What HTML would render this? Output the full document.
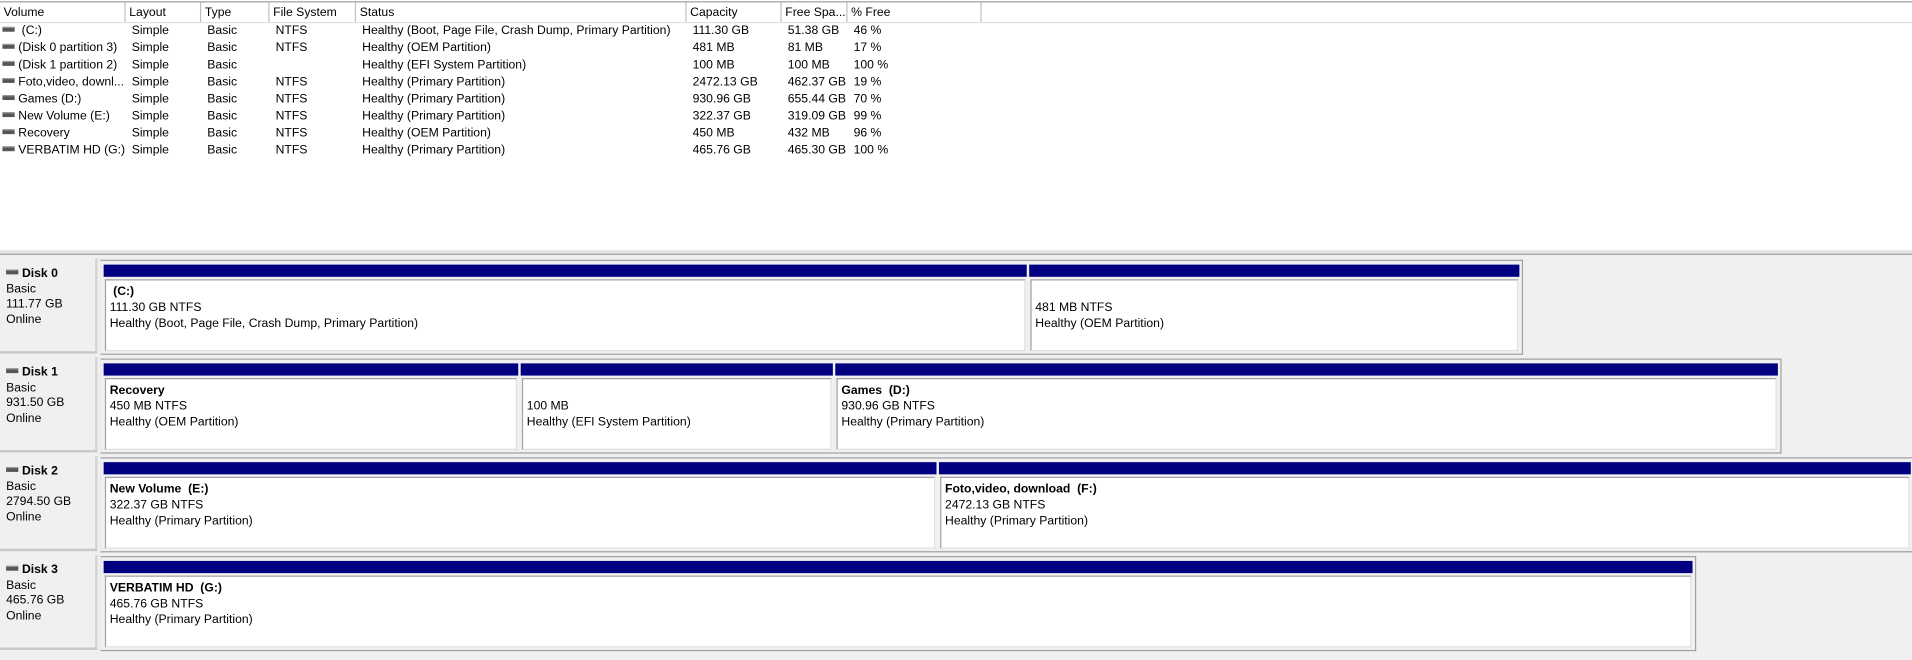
<!DOCTYPE html>
<html><head><style>
html,body{margin:0;padding:0;width:1912px;height:660px;overflow:hidden;background:#f0f0f0}
#w{position:absolute;left:0;top:0;width:1568px;height:541px;transform:scale(1.2194);transform-origin:0 0;font-family:"Liberation Sans",sans-serif;font-size:10px;color:#000}
.a{position:absolute;white-space:nowrap}
#top{position:absolute;left:0;top:0;width:1568px;height:205px;background:#fff;border-bottom:1px solid #c8c8c8}
#hdr{position:absolute;left:0;top:1px;width:1568px;height:16px;border-top:1px solid #a0a0a0;border-bottom:1px solid #e0e0e0;background:#fff}
.hc{position:absolute;top:0;height:16px;border-right:1px solid #c0c0c0;padding-left:3px;line-height:18px}
.ic{display:inline-block;width:10px;height:3px;background:#555;border-top:1px solid #999;vertical-align:middle;margin-right:3px;position:relative;top:-1px}
.disk{position:absolute;left:0;width:1568px}
.lbl{position:absolute;left:0;top:0;width:80px;height:78px;border-right:2px solid #d4d4d4;border-bottom:2px solid #c8c8c8;line-height:12.5px;padding:7px 0 0 5px;box-sizing:border-box}
.box{position:absolute;top:1px;height:78px;border:1px solid #a0a0a0;border-left:1px solid #e8e8e8;box-sizing:border-box;background:#f0f0f0}
.p{position:absolute;top:3px;height:72px}
.bar{position:absolute;left:0;right:0;top:0;height:10px;background:#000080}
.pc{position:absolute;left:1px;right:1px;top:12px;bottom:1px;background:#fff;border:1px solid #a0a0a0;border-right-color:#e0e0e0;border-bottom-color:#e0e0e0;padding:4px 0 0 3px;line-height:12.8px}
</style></head><body><div id="w">
<div id="top">
<div id="hdr">
<div class="hc" style="left:0;width:99px">Volume</div>
<div class="hc" style="left:103px;width:58px">Layout</div>
<div class="hc" style="left:165px;width:52px">Type</div>
<div class="hc" style="left:221px;width:67px">File System</div>
<div class="hc" style="left:292px;width:267px">Status</div>
<div class="hc" style="left:563px;width:74px">Capacity</div>
<div class="hc" style="left:641px;width:50px">Free Spa...</div>
<div class="hc" style="left:695px;width:106px">% Free</div>
</div>
<div id="rows"></div>
</div>
<div style="position:absolute;left:0;top:205px;width:1568px;height:3px;background:#e4e4e4;border-bottom:1px solid #a0a0a0"></div>

<div class="disk" style="top:212px">
<div class="lbl"><b><span class="ic"></span>Disk 0</b><br>Basic<br>111.77 GB<br>Online</div>
<div class="box" style="left:82px;width:1167px">
<div class="p" style="left:2px;width:757px"><div class="bar"></div><div class="pc"><b>&nbsp;(C:)</b><br>111.30 GB NTFS<br>Healthy (Boot, Page File, Crash Dump, Primary Partition)</div></div>
<div class="p" style="left:761px;width:402px"><div class="bar"></div><div class="pc"><br>481 MB NTFS<br>Healthy (OEM Partition)</div></div>
</div></div>

<div class="disk" style="top:293px">
<div class="lbl"><b><span class="ic"></span>Disk 1</b><br>Basic<br>931.50 GB<br>Online</div>
<div class="box" style="left:82px;width:1379px">
<div class="p" style="left:2px;width:340px"><div class="bar"></div><div class="pc"><b>Recovery</b><br>450 MB NTFS<br>Healthy (OEM Partition)</div></div>
<div class="p" style="left:344px;width:256px"><div class="bar"></div><div class="pc"><br>100 MB<br>Healthy (EFI System Partition)</div></div>
<div class="p" style="left:602px;width:773px"><div class="bar"></div><div class="pc"><b>Games &nbsp;(D:)</b><br>930.96 GB NTFS<br>Healthy (Primary Partition)</div></div>
</div></div>

<div class="disk" style="top:374px">
<div class="lbl"><b><span class="ic"></span>Disk 2</b><br>Basic<br>2794.50 GB<br>Online</div>
<div class="box" style="left:82px;width:1486px;border-right:none">
<div class="p" style="left:2px;width:683px"><div class="bar"></div><div class="pc"><b>New Volume &nbsp;(E:)</b><br>322.37 GB NTFS<br>Healthy (Primary Partition)</div></div>
<div class="p" style="left:687px;width:797px"><div class="bar"></div><div class="pc"><b>Foto,video, download &nbsp;(F:)</b><br>2472.13 GB NTFS<br>Healthy (Primary Partition)</div></div>
</div></div>

<div class="disk" style="top:455px">
<div class="lbl"><b><span class="ic"></span>Disk 3</b><br>Basic<br>465.76 GB<br>Online</div>
<div class="box" style="left:82px;width:1309px">
<div class="p" style="left:2px;width:1303px"><div class="bar"></div><div class="pc"><b>VERBATIM HD &nbsp;(G:)</b><br>465.76 GB NTFS<br>Healthy (Primary Partition)</div></div>
</div></div>

</div>
<script>
var d=[["&nbsp;(C:)","NTFS","Healthy (Boot, Page File, Crash Dump, Primary Partition)","111.30 GB","51.38 GB","46 %"],
["(Disk 0 partition 3)","NTFS","Healthy (OEM Partition)","481 MB","81 MB","17 %"],
["(Disk 1 partition 2)","","Healthy (EFI System Partition)","100 MB","100 MB","100 %"],
["Foto,video, downl...","NTFS","Healthy (Primary Partition)","2472.13 GB","462.37 GB","19 %"],
["Games (D:)","NTFS","Healthy (Primary Partition)","930.96 GB","655.44 GB","70 %"],
["New Volume (E:)","NTFS","Healthy (Primary Partition)","322.37 GB","319.09 GB","99 %"],
["Recovery","NTFS","Healthy (OEM Partition)","450 MB","432 MB","96 %"],
["VERBATIM HD (G:)","NTFS","Healthy (Primary Partition)","465.76 GB","465.30 GB","100 %"]];
var h="";d.forEach(function(r,i){var y=19+i*14;
h+='<div class="a" style="left:2px;top:'+y+'px;line-height:14px"><span class="ic"></span>'+r[0]+'</div>'+
'<div class="a" style="left:108px;top:'+y+'px;line-height:14px">Simple</div>'+
'<div class="a" style="left:170px;top:'+y+'px;line-height:14px">Basic</div>'+
'<div class="a" style="left:226px;top:'+y+'px;line-height:14px">'+r[1]+'</div>'+
'<div class="a" style="left:297px;top:'+y+'px;line-height:14px">'+r[2]+'</div>'+
'<div class="a" style="left:568px;top:'+y+'px;line-height:14px">'+r[3]+'</div>'+
'<div class="a" style="left:646px;top:'+y+'px;line-height:14px">'+r[4]+'</div>'+
'<div class="a" style="left:700px;top:'+y+'px;line-height:14px">'+r[5]+'</div>';});
document.getElementById("rows").innerHTML=h;
</script>
</body></html>
